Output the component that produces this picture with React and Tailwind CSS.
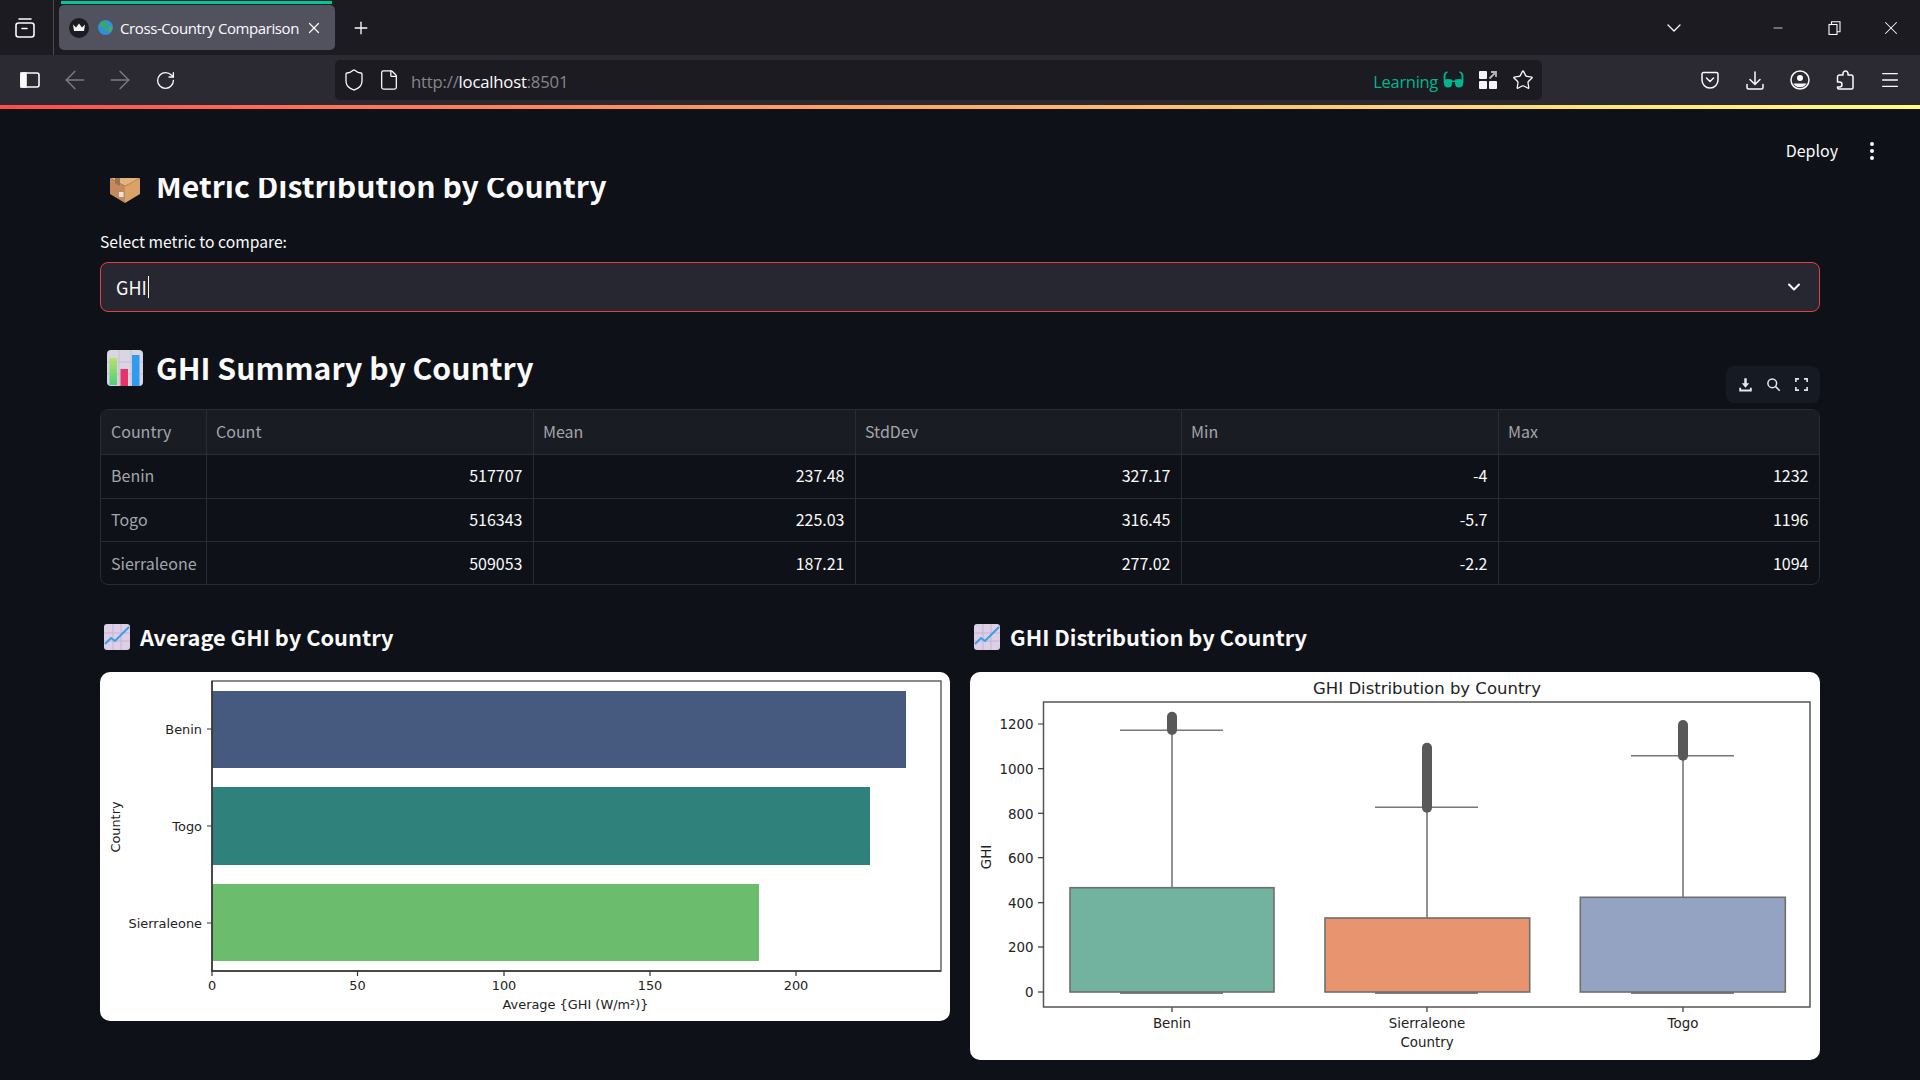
import React from 'react';
import { ArrowLeft, ArrowRight, ChevronDown, File, Menu, Minus, Plus, RotateCw, Shield, Star, X } from 'lucide-react';

const rows = [
    ['Benin', '517707', '237.48', '327.17', '-4', '1232'],
    ['Togo', '516343', '225.03', '316.45', '-5.7', '1196'],
    ['Sierraleone', '509053', '187.21', '277.02', '-2.2', '1094'],
];
const headers = ['Country', 'Count', 'Mean', 'StdDev', 'Min', 'Max'];
const gridCols = 'grid grid-cols-[106px_327px_322px_326px_317px_320px]';

const ToolbarIcon = ({ children }) => (
    <div className="w-[45px] h-full flex items-center justify-center text-[#fbfbfe]">{children}</div>
);

const BarEmoji = () => (
    <svg width="36" height="36" viewBox="0 0 36 36" className="shrink-0">
        <defs>
            <linearGradient id="emojiGreen" x1="0" y1="0" x2="0" y2="1">
                <stop offset="0" stopColor="#b6e36b" />
                <stop offset="1" stopColor="#4fce78" />
            </linearGradient>
        </defs>
        <rect width="36" height="36" rx="4" fill="#d9d5e2" />
        <path d="M0 12h36M0 24h36M12 0v36M24 0v36" stroke="#c6c1d2" strokeWidth="1" />
        <rect x="2.5" y="8" width="7.5" height="27" fill="url(#emojiGreen)" />
        <rect x="13.5" y="19" width="7.5" height="17" fill="#e8326e" />
        <rect x="25" y="5" width="7.5" height="31" fill="#2f9bee" />
    </svg>
);

const LineEmoji = () => (
    <svg width="26" height="26" viewBox="0 0 26 26" className="shrink-0">
        <rect width="26" height="26" rx="3" fill="#dccfe6" />
        <path d="M0 9h26M0 17h26M9 0v26M17 0v26" stroke="#c3b6d0" strokeWidth="1" />
        <path d="M1 20l6-6 4 3L25 3" fill="none" stroke="#3a9fe6" strokeWidth="2" />
    </svg>
);

const BoxEmoji = () => (
    <svg width="36" height="36" viewBox="-2 0 36 36" className="shrink-0">
        <path d="M16 2 L31 10 L16 18 L1 10 Z" fill="#e6b27c" />
        <path d="M1 10 L16 18 V35 L1 26 Z" fill="#c48a5e" />
        <path d="M31 10 L16 18 V35 L31 26 Z" fill="#dba268" />
        <path d="M6 7.5 L11 5 V18 L6 15.5 Z" fill="#9a7458" />
        <rect x="10" y="24" width="4.5" height="5" fill="#e9e2df" />
    </svg>
);

const Globe = () => (
    <svg width="15" height="15" viewBox="0 0 15 15">
        <circle cx="7.5" cy="7.5" r="7.5" fill="#2f8fe0" />
        <path d="M3 2.5C5 .8 8 .8 10 2c.8 1.700-.8 2.500-1.300 4s1.800 2.200 1.300 4-2.300 1.800-3 .2S4.500 8 3 7 2 3.500 3 2.500z" fill="#3aa56c" />
        <path d="M11 6c1.500-.2 2.800.5 3.500 1.500-.3 2.300-1.500 4-2.800 5-1.200-1.200-1.700-4.500-.7-6.500z" fill="#46ab68" />
    </svg>
);

const Crown = () => (
    <div className="w-[20px] h-[20px] rounded-full bg-[#1c1b22] flex items-center justify-center">
        <svg width="14" height="10" viewBox="0 0 14 10">
            <path d="M1 1.5l3 3L7 .5l3 4 3-3-1 6.500H2z" fill="#f4f4f6" />
        </svg>
    </div>
);

const TabStrip = () => (
    <div className="h-[55px] bg-[#1c1b22] flex items-stretch shrink-0">
        <div className="w-[54px] border-r border-[#4a4a52] flex items-center justify-center pr-[4px]">
            <svg width="20" height="20" viewBox="0 0 20 20" fill="none" stroke="#fbfbfe" strokeWidth="1.6">
                <rect x="1" y="5" width="18" height="14" rx="2.5" />
                <path d="M4 1h12M7 10.5h5" strokeLinecap="round" />
            </svg>
        </div>
        <div className="relative ml-[5px] mt-[5px] w-[276px] h-[45px] rounded-[5px] bg-[#52525e] flex items-center pl-[10px]">
            <div className="absolute -top-[4px] left-[2px] right-[3px] h-[3px] bg-[#00c79c]" />
            <Crown />
            <div className="ml-[9px]"><Globe /></div>
            <span className="ml-[7px] text-[15px] leading-[20px] text-[#fbfbfe] whitespace-nowrap font-['Open_Sans',sans-serif] tracking-[-0.4px]">Cross-Country Comparison</span>
            <X size={18} strokeWidth={1.6} className="absolute left-[246px] top-[14px] text-[#fbfbfe]" />
        </div>
        <div className="ml-[16px] flex items-center pt-[1px]"><Plus size={20} strokeWidth={1.6} className="text-[#fbfbfe]" /></div>
        <div className="ml-auto flex items-center text-[#fbfbfe]">
            <ChevronDown size={24} strokeWidth={1.3} />
            <div className="w-[63px]" />
            <div className="w-[57px] flex justify-center"><Minus size={14} strokeWidth={1.3} /></div>
            <div className="w-[56px] flex justify-center">
                <svg width="13" height="14" viewBox="0 0 13 14" fill="none" stroke="#fbfbfe" strokeWidth="1.1">
                    <rect x="1" y="3.5" width="8" height="10" />
                    <path d="M3.5 3.5V.8h8.500v10H9" />
                </svg>
            </div>
            <div className="w-[58px] flex justify-center pr-[1px]"><X size={22} strokeWidth={1.1} /></div>
        </div>
    </div>
);

const AddressBar = () => (
    <div className="ml-[147px] w-[1207px] h-[40px] rounded-[5px] bg-[#1c1b22] flex items-center text-[#fbfbfe]">
        <Shield size={24} strokeWidth={1.3} className="ml-[7px]" />
        <File size={22} strokeWidth={1.4} className="ml-[12px]" />
        <div className="ml-[11px] text-[16.7px] leading-[24px] font-['Open_Sans',sans-serif] tracking-[-0.2px] mt-[3px]">
            <span className="text-[#85858c]">http://</span>
            <span className="text-[#fbfbfe]">localhost</span>
            <span className="text-[#85858c]">:8501</span>
        </div>
        <span className="ml-auto text-[#00b58f] text-[16.5px] leading-[24px] font-['Open_Sans',sans-serif] tracking-[-0.3px] mt-[3px]">Learning</span>
        <svg width="21" height="18" viewBox="0 0 21 18" className="ml-[5px]" fill="none">
            <path d="M1.500 12V5c0-2 1-3.500 3-4M19.500 12V5c0-2-1-3.500-3-4" stroke="#00b58f" strokeWidth="1.8" />
            <path d="M1 8.500c2.500-.8 5.500-.8 8 0v4a4 4 0 01-8 0zM12 8.500c2.500-.8 5.500-.8 8 0v4a4 4 0 01-8 0zM9 9.500h3v1.500H9z" fill="#00b58f" />
        </svg>
        <svg width="18" height="18" viewBox="0 0 18 18" className="ml-[15px]">
            <rect x="0" y="0" width="8" height="8" rx="1" fill="#f5f5f7" />
            <rect x="0" y="10" width="8" height="8" rx="1" fill="#f5f5f7" />
            <rect x="10" y="10" width="8" height="8" rx="1" fill="#f5f5f7" />
            <path d="M10.5 7.500L17 1M12 1h5v5" fill="none" stroke="#b5b5bb" strokeWidth="1.8" />
        </svg>
        <Star size={22} strokeWidth={1.4} className="ml-[15px] mr-[8px]" />
    </div>
);

const BrowserToolbar = () => (
    <div className="h-[50px] bg-[#2b2a33] flex items-center shrink-0 pl-[8px]">
        <ToolbarIcon>
            <svg width="20" height="16" viewBox="0 0 20 16" fill="none" stroke="#fbfbfe" strokeWidth="1.6" className="-ml-[1px]">
                <rect x="1" y="1" width="18" height="14" rx="2" />
                <rect x="1" y="1" width="5" height="14" fill="#fbfbfe" />
            </svg>
        </ToolbarIcon>
        <ToolbarIcon><ArrowLeft size={30} strokeWidth={1.1} className="text-[#7d7c83] -ml-[2px]" /></ToolbarIcon>
        <ToolbarIcon><ArrowRight size={30} strokeWidth={1.1} className="text-[#7d7c83] -ml-[2px]" /></ToolbarIcon>
        <ToolbarIcon><RotateCw size={21} strokeWidth={1.5} /></ToolbarIcon>
        <AddressBar />
        <div className="ml-[145px] flex items-center h-full">
            <ToolbarIcon>
                <svg width="18" height="18" viewBox="0 0 18 18" fill="none" stroke="#fbfbfe" strokeWidth="1.5">
                    <path d="M2.500 1.500h13a1.500 1.500 0 011.500 1.500v6a8 8 0 01-16 0V3a1.500 1.500 0 011.500-1.500z" />
                    <path d="M5.500 7l3.500 3.500L12.500 7" strokeLinecap="round" />
                </svg>
            </ToolbarIcon>
            <ToolbarIcon>
                <svg width="18" height="19" viewBox="0 0 18 19" fill="none" stroke="#fbfbfe" strokeWidth="1.5">
                    <path d="M9 1v12M4 8.500L9 13.500l5-5M1 13.500v3a1.500 1.500 0 001.500 1.500h13a1.500 1.500 0 001.500-1.500v-3" strokeLinecap="round" />
                </svg>
            </ToolbarIcon>
            <ToolbarIcon>
                <svg width="20" height="20" viewBox="0 0 20 20" fill="none">
                    <circle cx="10" cy="10" r="9" stroke="#fbfbfe" strokeWidth="1.5" />
                    <circle cx="10" cy="8" r="3" fill="#fbfbfe" />
                    <path d="M3.500 13.500h13a7.500 7.500 0 01-13 0z" fill="#fbfbfe" />
                </svg>
            </ToolbarIcon>
            <ToolbarIcon>
                <svg width="18" height="20" viewBox="0 0 18 20" fill="none" stroke="#fbfbfe" strokeWidth="1.5">
                    <path d="M9.500 1a2.500 2.500 0 012.500 2.500V5h3a2 2 0 012 2v10.500a1.500 1.500 0 01-1.500 1.500H3a1.500 1.500 0 01-1.500-1.500V17H3.500a2.500 2.500 0 000-5H1.500V7a2 2 0 012-2h3.500V3.500A2.500 2.500 0 019.500 1z" strokeLinejoin="round" />
                </svg>
            </ToolbarIcon>
            <ToolbarIcon><Menu size={22} strokeWidth={1.4} /></ToolbarIcon>
        </div>
    </div>
);

const Heading2 = ({ icon, text }) => (
    <div className="h-[52px] flex items-center pl-[7px]">
        {icon}
        <h2 className="ml-[13px] pb-[2px] text-[30.2px] leading-[50px] font-semibold text-[#fafafa] whitespace-nowrap">{text}</h2>
    </div>
);

const Heading3 = ({ text }) => (
    <div className="h-[40px] mb-[15px] flex items-center pl-[4px]">
        <LineEmoji />
        <h3 className="ml-[10px] text-[21.8px] leading-[40px] font-semibold text-[#fafafa] whitespace-nowrap">{text}</h3>
    </div>
);

const TableTools = () => (
    <div className="mt-[24px] w-[94px] h-[37px] rounded-[8px] bg-[#161a22] flex items-center justify-center gap-[13px] text-[#e8e8ea]">
        <svg width="15" height="15" viewBox="0 0 24 24" fill="currentColor">
            <path d="M10 2h4v8h4l-6 7-6-7h4zM2 17h3v3h14v-3h3v6H2z" />
        </svg>
        <svg width="15" height="15" viewBox="0 0 24 24" fill="none" stroke="currentColor" strokeWidth="2.4">
            <circle cx="10" cy="10" r="7" />
            <path d="M15 15l7 7" />
        </svg>
        <svg width="15" height="15" viewBox="0 0 24 24" fill="none" stroke="currentColor" strokeWidth="2.6">
            <path d="M3 8V3h5M16 3h5v5M21 16v5h-5M8 21H3v-5" />
        </svg>
    </div>
);

const SummaryTable = () => (
    <div className="h-[176px] rounded-[8px] border border-[#2a2c34] overflow-hidden text-[16px] leading-[24px]">
        <div className={`${gridCols} h-[45px] bg-[#1a1c24] border-b border-[#2a2c34]`}>
            {headers.map((h, i) => (
                <div key={h} className={`flex items-center text-[#a3a5ab] pb-[2px] ${i === 0 ? 'pl-[10px]' : 'pl-[9px]'} ${i < 5 ? 'border-r border-[#2a2c34]' : ''}`}>{h}</div>
            ))}
        </div>
        {rows.map((row, r) => (
            <div key={row[0]} className={`${gridCols} h-[43.7px] ${r < 2 ? 'border-b border-[#2a2c34]' : ''}`}>
                {row.map((cell, i) => (
                    <div
                        key={i}
                        className={`flex items-center pb-[3px] ${i === 0 ? 'pl-[10px] text-[#a3a5ab]' : 'pr-[10.5px] justify-end text-[#fafafa]'} ${i < 5 ? 'border-r border-[#2a2c34]' : ''}`}
                    >
                        {cell}
                    </div>
                ))}
            </div>
        ))}
    </div>
);

const BarChart = () => {
    const bars = [
        { label: 'Benin', y: 19, h: 77, end: 806, fill: '#46597f', tick: 57 },
        { label: 'Togo', y: 115, h: 78, end: 770, fill: '#2e827b', tick: 154 },
        { label: 'Sierraleone', y: 212, h: 77, end: 659, fill: '#6cbc6e', tick: 251 },
    ];
    const xTicks = [[112, '0'], [257.5, '50'], [404, '100'], [550, '150'], [696, '200']];
    return (
        <svg width="850" height="349" viewBox="0 0 850 349" className="font-['DejaVu_Sans',sans-serif] text-[12.9px] fill-[#222222]">
            {bars.map((b) => (
                <g key={b.label}>
                    <rect x="112" y={b.y} width={b.end - 112} height={b.h} fill={b.fill} />
                    <path d={`M107 ${b.tick}h5`} stroke="#333" strokeWidth="1.2" />
                    <text x="102" y={b.tick} textAnchor="end" dominantBaseline="central">{b.label}</text>
                </g>
            ))}
            <rect x="112" y="9" width="729" height="290" fill="none" stroke="#5a5a5a" strokeWidth="1.4" />
            <path d="M112 9V299H841" fill="none" stroke="#333" strokeWidth="1.5" />
            {xTicks.map(([x, label]) => (
                <g key={label}>
                    <path d={`M${x} 299v5`} stroke="#333" strokeWidth="1.2" />
                    <text x={x} y="313.5" textAnchor="middle" dominantBaseline="central">{label}</text>
                </g>
            ))}
            <text x="475.5" y="332.5" textAnchor="middle" dominantBaseline="central">Average {'{'}GHI (W/m²){'}'}</text>
            <text x="15" y="155" textAnchor="middle" dominantBaseline="central" transform="rotate(-90 15 155)">Country</text>
        </svg>
    );
};

const BoxPlot = () => {
    const boxes = [
        { label: 'Benin', x1: 100, x2: 304, top: 215.7, cx: 202, capY: 58.3, fly: [39.7, 63], fill: '#72b3a0' },
        { label: 'Sierraleone', x1: 355, x2: 559.7, top: 246, cx: 457, capY: 135.3, fly: [70.7, 140.7], fill: '#e8956f' },
        { label: 'Togo', x1: 610.3, x2: 815.3, top: 225.3, cx: 713, capY: 83.7, fly: [48, 88.7], fill: '#94a3c1' },
    ];
    const yTicks = [[52, '1200'], [96.7, '1000'], [141.3, '800'], [185.7, '600'], [230.7, '400'], [275, '200'], [320, '0']];
    return (
        <svg width="850" height="388" viewBox="0 0 850 388" className="font-['DejaVu_Sans',sans-serif] text-[13.4px] fill-[#222222]">
            <text x="457" y="16.5" textAnchor="middle" dominantBaseline="central" className="text-[16.5px]">GHI Distribution by Country</text>
            {boxes.map((b) => (
                <g key={b.label}>
                    <path d={`M${b.cx} ${b.capY}V${b.top}`} stroke="#777" strokeWidth="1.6" />
                    <path d={`M${b.cx - 52} ${b.capY}h103`} stroke="#777" strokeWidth="1.6" />
                    <path d={`M${b.cx - 52} 321h103`} stroke="#555" strokeWidth="1.6" />
                    <rect x={b.cx - 5} y={b.fly[0]} width="10" height={b.fly[1] - b.fly[0]} rx="5" fill="#595959" />
                    <rect x={b.x1} y={b.top} width={b.x2 - b.x1} height={320 - b.top} fill={b.fill} stroke="#6f6f6f" strokeWidth="1.6" />
                    <path d={`M${b.cx} 335v5`} stroke="#333" strokeWidth="1.2" />
                    <text x={b.cx} y="351" textAnchor="middle" dominantBaseline="central">{b.label}</text>
                </g>
            ))}
            <rect x="73.5" y="30" width="766.5" height="305" fill="none" stroke="#555" strokeWidth="1.5" />
            {yTicks.map(([y, label]) => (
                <g key={label}>
                    <path d={`M68 ${y}h5.5`} stroke="#333" strokeWidth="1.2" />
                    <text x="63.5" y={y + 0.7} textAnchor="end" dominantBaseline="central">{label}</text>
                </g>
            ))}
            <text x="457" y="370" textAnchor="middle" dominantBaseline="central">Country</text>
            <text x="16" y="185" textAnchor="middle" dominantBaseline="central" transform="rotate(-90 16 185)">GHI</text>
        </svg>
    );
};

const App = () => {
    return (
        <div className="w-[1920px] h-[1080px] overflow-hidden flex flex-col bg-[#0e1117]">
            <TabStrip />
            <BrowserToolbar />
            <div className="h-[4px] bg-linear-to-r from-[#ff4b4b] to-[#fffd80] shrink-0" />

            <main className="flex-1 flex flex-col px-[100px] font-['Noto_Sans_CJK_SC',sans-serif] text-[#fafafa]">
                {/* Streamlit header */}
                <div className="h-[69px] -mr-[56px] flex justify-end pt-[28px]">
                    <span className="text-[16px] leading-[26px]">Deploy</span>
                    <div className="ml-[32px] mr-[2px] h-[26px] flex flex-col items-center justify-center gap-[3px] mt-[1px]">
                        <span className="w-[4px] h-[4px] rounded-full bg-[#fafafa]" />
                        <span className="w-[4px] h-[4px] rounded-full bg-[#fafafa]" />
                        <span className="w-[4px] h-[4px] rounded-full bg-[#fafafa]" />
                    </div>
                </div>

                {/* Heading scrolled under the header */}
                <div className="h-[34px] overflow-hidden mb-[18px]">
                    <div className="-mt-[18px]">
                        <Heading2 icon={<BoxEmoji />} text="Metric Distribution by Country" />
                    </div>
                </div>

                <label className="h-[24px] mb-[8px] text-[15.7px] leading-[24px]">Select metric to compare:</label>
                <div className="h-[50px] rounded-[8px] border border-[#e5403f] bg-[#262730] flex items-center justify-between pl-[15px] pr-[15px]">
                    <div className="flex items-center text-[18px] leading-[24px]">
                        GHI
                        <span className="w-px h-[22px] bg-[#fafafa] ml-[1px]" />
                    </div>
                    <ChevronDown size={20} strokeWidth={2.4} />
                </div>

                <div className="mt-[30px] h-[67px] flex items-start justify-between">
                    <Heading2 icon={<BarEmoji />} text="GHI Summary by Country" />
                    <TableTools />
                </div>
                <SummaryTable />

                <div className="mt-[32px] grid grid-cols-2 gap-[20px] items-start">
                    <div>
                        <Heading3 text="Average GHI by Country" />
                        <div className="bg-white rounded-[10px] overflow-hidden">
                            <BarChart />
                        </div>
                    </div>
                    <div>
                        <Heading3 text="GHI Distribution by Country" />
                        <div className="bg-white rounded-[10px] overflow-hidden">
                            <BoxPlot />
                        </div>
                    </div>
                </div>
            </main>
        </div>
    );
};

export default App;
